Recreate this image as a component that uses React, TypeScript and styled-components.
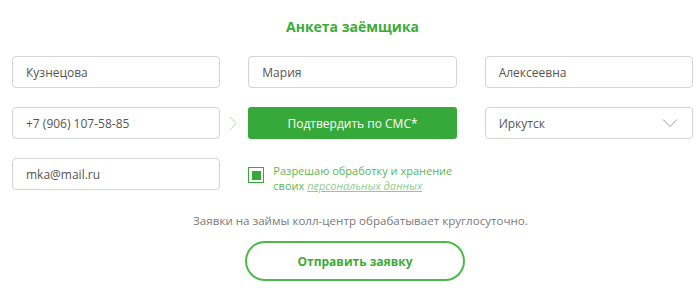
import styled, { createGlobalStyle } from "styled-components";

const colours = {
  green: "#37a93a",
  title: "#3dab38",
  label: "#58b757",
  link: "#8fcb8d",
  border: "#d4d4d4",
  text: "#555555",
  note: "#7a7a7a",
};

const GlobalStyle = createGlobalStyle`
  body {
    margin: 0;
    background: #ffffff;
    font-family: "Open Sans", "Liberation Sans", sans-serif;
  }
`;

const Page = styled.form`
  width: 700px;
  height: 304px;
  padding: 18px 7px 0 12px;
  box-sizing: border-box;
  display: flex;
  flex-direction: column;
  align-items: stretch;
`;

const Title = styled.h2`
  margin: 0 0 20px;
  font-size: 14px;
  line-height: 18px;
  font-weight: 700;
  color: ${colours.title};
  text-align: center;
`;

const Grid = styled.div`
  display: grid;
  grid-template-columns: repeat(3, 1fr);
  column-gap: 28px;
  row-gap: 19px;
`;

const Field = styled.div`
  position: relative;
  height: 32px;
  box-sizing: border-box;
  border: 1px solid ${colours.border};
  border-radius: 4px;
  display: flex;
  align-items: center;
  padding: 0 12px 0 13px;
  font-size: 12px;
  color: ${colours.text};
`;

const FieldValue = styled.span`
  flex: 1;
`;

const Chevron = styled.svg`
  width: 16px;
  height: 10px;
  margin-right: 2px;
`;

const SmsCell = styled.div`
  position: relative;
`;

const Arrow = styled.svg`
  position: absolute;
  left: -19px;
  top: 9px;
  width: 8px;
  height: 15px;
`;

const SmsButton = styled.button`
  width: 100%;
  height: 32px;
  border: none;
  border-radius: 3px;
  background: ${colours.green};
  color: #ffffff;
  font-family: inherit;
  font-size: 12px;
  cursor: pointer;
`;

const Consent = styled.label`
  grid-column: 2 / 4;
  display: flex;
  align-items: flex-start;
  gap: 9px;
  padding-top: 6px;
`;

const Box = styled.span`
  flex: none;
  width: 16px;
  height: 16px;
  margin-top: 3px;
  box-sizing: border-box;
  border: 1.5px solid ${colours.green};
  display: flex;
  align-items: center;
  justify-content: center;

  &::after {
    content: "";
    width: 9px;
    height: 9px;
    background: ${colours.green};
  }
`;

const ConsentText = styled.span`
  font-size: 11px;
  line-height: 14.5px;
  color: ${colours.label};
`;

const Link = styled.a`
  color: ${colours.link};
  font-style: italic;
  text-decoration: underline;
`;

const Note = styled.p`
  margin: 21px 0 0;
  font-size: 11.6px;
  line-height: 14px;
  color: ${colours.note};
  text-align: center;
  padding-left: 16px;
`;

const SubmitButton = styled.button`
  align-self: center;
  margin: 13px 0 0 5px;
  width: 220px;
  height: 40px;
  border: 2px solid #4cba4a;
  border-radius: 20px;
  background: #ffffff;
  color: ${colours.title};
  font-family: inherit;
  font-size: 12px;
  font-weight: 700;
  cursor: pointer;
`;

const App = () => {
  return (
    <>
      <GlobalStyle />
      <Page onSubmit={(e) => e.preventDefault()}>
        <Title>Анкета заёмщика</Title>
        <Grid>
          <Field>
            <FieldValue>Кузнецова</FieldValue>
          </Field>
          <Field>
            <FieldValue>Мария</FieldValue>
          </Field>
          <Field>
            <FieldValue>Алексеевна</FieldValue>
          </Field>

          <Field>
            <FieldValue>+7 (906) 107-58-85</FieldValue>
          </Field>
          <SmsCell>
            <Arrow viewBox="0 0 8 15">
              <path d="M1 1 L7 7.5 L1 14" fill="none" stroke="#b5dcb3" strokeWidth="1" />
            </Arrow>
            <SmsButton type="button">Подтвердить по СМС*</SmsButton>
          </SmsCell>
          <Field>
            <FieldValue>Иркутск</FieldValue>
            <Chevron viewBox="0 0 16 10">
              <path d="M1 1.5 L8 8.5 L15 1.5" fill="none" stroke="#9a9a9a" strokeWidth="1" />
            </Chevron>
          </Field>

          <Field>
            <FieldValue>mka@mail.ru</FieldValue>
          </Field>
          <Consent>
            <Box />
            <ConsentText>
              Разрешаю обработку и хранение
              <br />
              своих <Link>персональных данных</Link>
            </ConsentText>
          </Consent>
        </Grid>
        <Note>Заявки на займы колл-центр обрабатывает круглосуточно.</Note>
        <SubmitButton type="submit">Отправить заявку</SubmitButton>
      </Page>
    </>
  );
};

export default App;
